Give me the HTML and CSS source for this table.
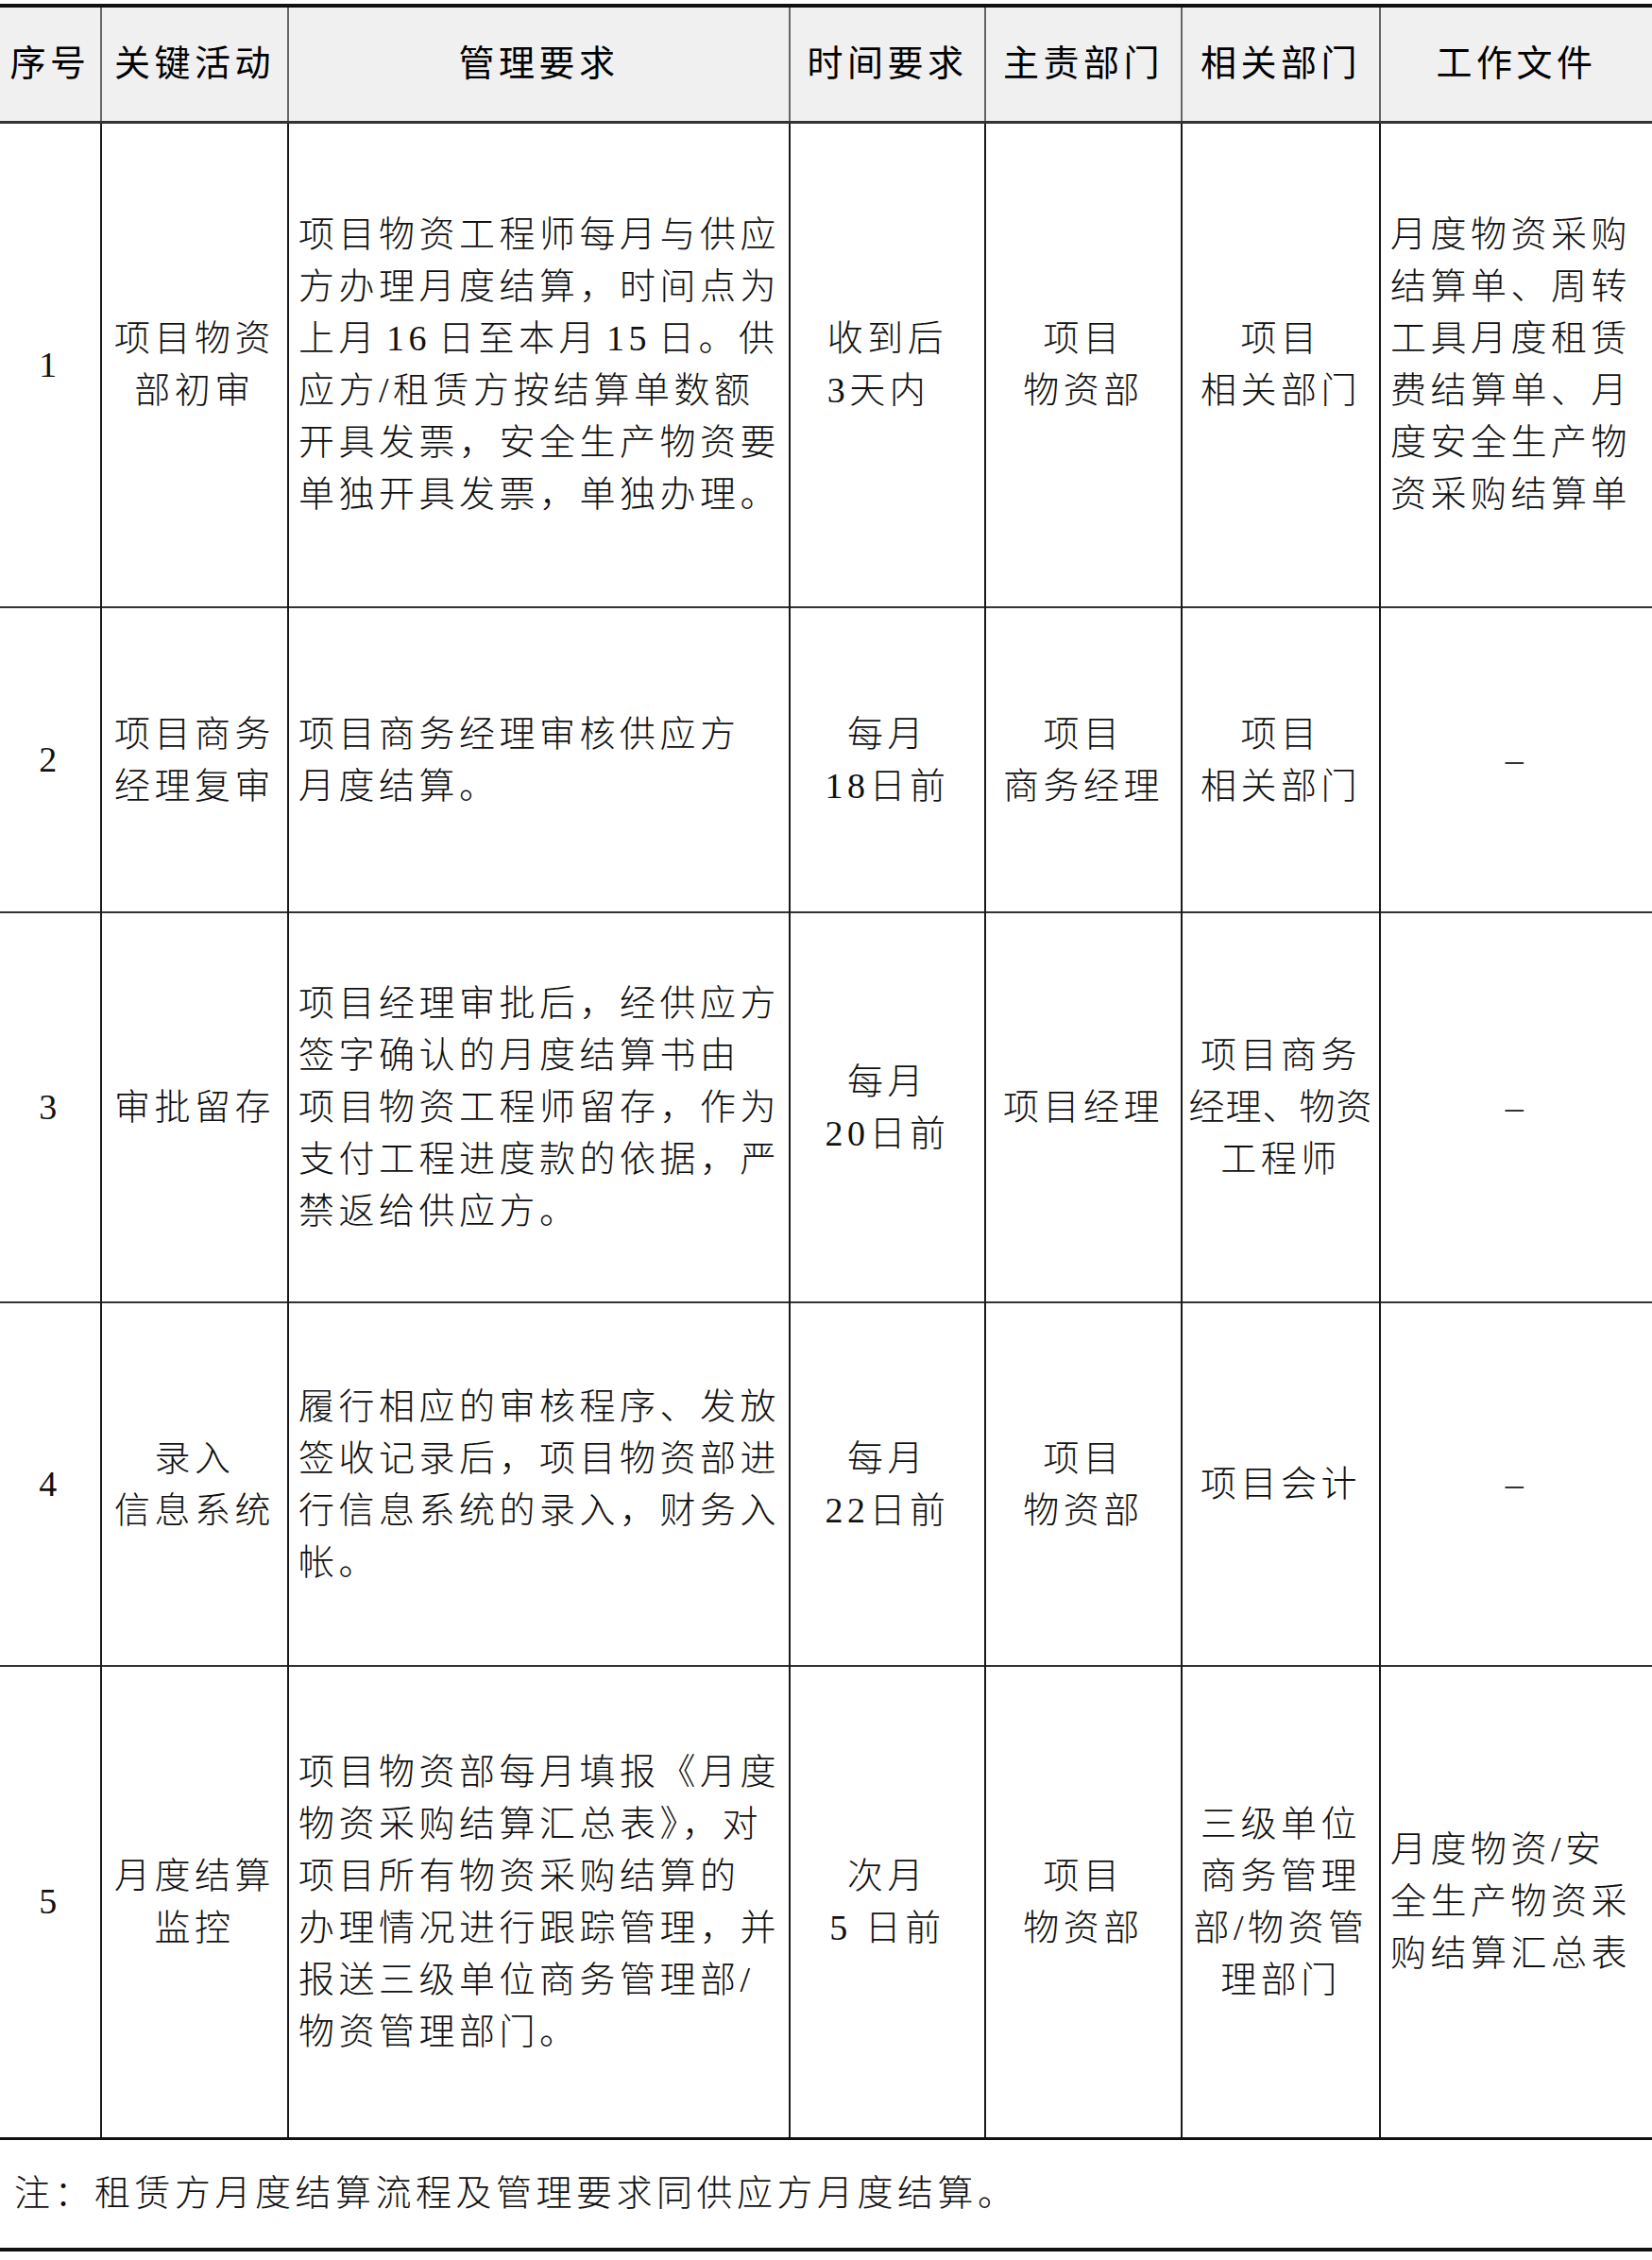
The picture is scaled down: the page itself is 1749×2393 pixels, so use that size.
FILE: index.html
```html
<!DOCTYPE html>
<html lang="zh-CN">
<head>
<meta charset="utf-8">
<title>月度结算</title>
<link rel="stylesheet" href="styles.css">
</head>
<body>
<div class="page">
<table class="grid">
  <colgroup>
    <col class="c1"><col class="c2"><col class="c3"><col class="c4"><col class="c5"><col class="c6"><col class="c7">
  </colgroup>
  <thead>
    <tr class="head">
      <th>序号</th><th>关键活动</th><th>管理要求</th><th>时间要求</th><th>主责部门</th><th>相关部门</th><th>工作文件</th>
    </tr>
  </thead>
  <tbody>
    <tr class="r1">
      <td class="num">1</td>
      <td class="ctr">项目物资<br>部初审</td>
      <td class="txt">项目物资工程师每月与供应<br>方办理月度结算，时间点为<br><span class="tight">上月 16 日至本月 15 日。供</span><br>应方/租赁方按结算单数额<br>开具发票，安全生产物资要<br>单独开具发票，单独办理。</td>
      <td class="ctr"><span class="blk">收到后<br>3天内</span></td>
      <td class="ctr">项目<br>物资部</td>
      <td class="ctr">项目<br>相关部门</td>
      <td class="txt">月度物资采购<br>结算单、周转<br>工具月度租赁<br>费结算单、月<br>度安全生产物<br>资采购结算单</td>
    </tr>
    <tr class="r2">
      <td class="num">2</td>
      <td class="ctr">项目商务<br>经理复审</td>
      <td class="txt">项目商务经理审核供应方<br>月度结算。</td>
      <td class="ctr">每月<br>18日前</td>
      <td class="ctr">项目<br>商务经理</td>
      <td class="ctr">项目<br>相关部门</td>
      <td class="ctr dash">–</td>
    </tr>
    <tr class="r3">
      <td class="num">3</td>
      <td class="ctr">审批留存</td>
      <td class="txt">项目经理审批后，经供应方<br>签字确认的月度结算书由<br>项目物资工程师留存，作为<br>支付工程进度款的依据，严<br>禁返给供应方。</td>
      <td class="ctr">每月<br>20日前</td>
      <td class="ctr">项目经理</td>
      <td class="ctr">项目商务<br><span class="squeeze">经理、物资</span><br>工程师</td>
      <td class="ctr dash">–</td>
    </tr>
    <tr class="r4">
      <td class="num">4</td>
      <td class="ctr">录入<br>信息系统</td>
      <td class="txt">履行相应的审核程序、发放<br>签收记录后，项目物资部进<br>行信息系统的录入，财务入<br>帐。</td>
      <td class="ctr">每月<br>22日前</td>
      <td class="ctr">项目<br>物资部</td>
      <td class="ctr">项目会计</td>
      <td class="ctr dash">–</td>
    </tr>
    <tr class="r5">
      <td class="num">5</td>
      <td class="ctr">月度结算<br>监控</td>
      <td class="txt">项目物资部每月填报《月度<br>物资采购结算汇总表》，对<br>项目所有物资采购结算的<br>办理情况进行跟踪管理，并<br>报送三级单位商务管理部/<br>物资管理部门。</td>
      <td class="ctr">次月<br>5 日前</td>
      <td class="ctr">项目<br>物资部</td>
      <td class="ctr">三级单位<br>商务管理<br>部/物资管<br>理部门</td>
      <td class="txt">月度物资/安<br>全生产物资采<br>购结算汇总表</td>
    </tr>
  </tbody>
</table>
<div class="note">注：租赁方月度结算流程及管理要求同供应方月度结算。</div>
</div>
</body>
</html>
```

FILE: styles.css
```css
html, body {
  margin: 0;
  padding: 0;
  background: #ffffff;
}

.page {
  width: 1749px;
  padding-top: 4px;
  font-family: "Liberation Serif", "Noto Sans CJK SC", serif;
  font-size: 38px;
  letter-spacing: 4.5px;
  line-height: 55px;
  color: #111;
}

.grid {
  width: 1749px;
  border-collapse: collapse;
  table-layout: fixed;
  border-top: 4px solid #111;
  border-bottom: 3px solid #111;
}

.c1 { width: 107px; }
.c2 { width: 198px; }
.c3 { width: 531px; }
.c4 { width: 207px; }
.c5 { width: 208px; }
.c6 { width: 210px; }
.c7 { width: 288px; }

.grid th,
.grid td {
  padding: 0;
  vertical-align: middle;
  white-space: nowrap;
  overflow: visible;
}

.head {
  height: 123px;
  background: #f0f0f0;
}

.head th {
  font-weight: 400;
  color: #000;
  text-align: center;
  border-left: 2px solid #666;
  border-bottom: 3px solid #333;
}

.head th:first-child { border-left: none; }

.grid td {
  font-weight: 300;
  border-left: 2px solid #1a1a1a;
  border-top: 2px solid #333;
}

.grid td:first-child { border-left: none; }

.r1 { height: 514px; }
.r2 { height: 323px; }
.r3 { height: 413px; }
.r4 { height: 385px; }
.r5 { height: 500px; }

.num {
  text-align: center;
}

.ctr {
  text-align: center;
}

.txt {
  text-align: left;
  padding-left: 10px !important;
  padding-right: 4px !important;
}

.blk {
  display: inline-block;
  text-align: left;
}

.tight {
  word-spacing: -6px;
}

.squeeze {
  letter-spacing: 1px;
}

.dash {
  color: #333;
}

.note {
  height: 114px;
  display: flex;
  align-items: center;
  padding-left: 15px;
  border-bottom: 4px solid #111;
  font-weight: 300;
}
```
